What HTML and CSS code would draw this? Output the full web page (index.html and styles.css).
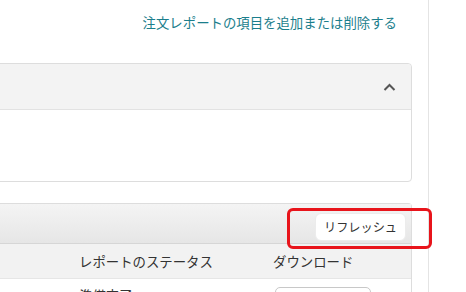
FILE: index.html
```html
<!DOCTYPE html>
<html lang="ja">
<head>
    <meta charset="UTF-8">
    <meta name="viewport" content="width=device-width, initial-scale=1.0">
    <title>注文レポート</title>
    <link rel="stylesheet" href="styles.css">
</head>
<body>
    <div class="page">
        <div class="main">
            <div class="toolbar">
                <a class="link" href="#">注文レポートの項目を追加または削除する</a>
            </div>

            <!-- request panel (collapsed content) -->
            <div class="panel panel-request">
                <div class="panel-head">
                    <svg class="chevron" width="13" height="8" viewBox="0 0 13 8">
                        <polyline points="1.5,7 6.5,2 11.5,7" fill="none" stroke="#555" stroke-width="2"/>
                    </svg>
                </div>
                <div class="panel-body"></div>
            </div>

            <!-- report list -->
            <div class="panel panel-list">
                <div class="list-head">
                    <button class="btn-refresh" type="button">リフレッシュ</button>
                    <div class="highlight"></div>
                </div>
                <div class="table-row table-head">
                    <div class="cell"></div>
                    <div class="cell">レポートのステータス</div>
                    <div class="cell">ダウンロード</div>
                </div>
                <div class="table-row">
                    <div class="cell"><span class="cut">JST</span></div>
                    <div class="cell">準備完了</div>
                    <div class="cell"><button class="btn-download" type="button" aria-label="ダウンロード"></button></div>
                </div>
            </div>
        </div>
        <div class="side"></div>
    </div>
</body>
</html>
```

FILE: styles.css
```css
body {
    margin: 0;
    overflow: hidden;
    background-color: #fff;
    font-family: "Noto Sans CJK JP", "Liberation Sans", sans-serif;
    color: #333;
}

.page {
    display: flex;
    height: 292px;
}

.main {
    width: 428px;
    flex: none;
    padding-right: 16px;
    box-sizing: border-box;
}

.side {
    flex: 1;
    border-left: 1px solid #e4e4e4;
}

.toolbar {
    display: flex;
    justify-content: flex-end;
    padding: 12px 15px 0 0;
}

.link {
    color: #1b7e8c;
    font-size: 13.4px;
    line-height: 20px;
    text-decoration: none;
}

/* shared panel box */
.panel {
    margin-left: -6px;
    border: 1px solid #dddddd;
    border-radius: 4px;
    background-color: #fff;
}

.panel-request {
    margin-top: 31px;
}

.panel-head {
    height: 45px;
    display: flex;
    justify-content: flex-end;
    align-items: center;
    padding-right: 15px;
    background-color: #f3f3f3;
    border-bottom: 1px solid #e2e2e2;
    border-radius: 4px 4px 0 0;
}

.panel-body {
    height: 71px;
}

.panel-list {
    margin-top: 21px;
    border-bottom: none;
    border-radius: 4px 4px 0 0;
}

.list-head {
    position: relative;
    height: 40px;
    box-sizing: border-box;
    display: flex;
    justify-content: flex-end;
    align-items: flex-start;
    padding: 9px 5px 0 0;
    background: linear-gradient(#f4f4f4, #e6e6e6);
    border-bottom: 1px solid #d6d6d6;
}

.btn-refresh {
    width: 91px;
    height: 28px;
    padding: 0;
    border: 1px solid #ececec;
    border-radius: 6px;
    background-color: #fff;
    font-family: inherit;
    font-size: 12.2px;
    color: #333;
}

/* red annotation around the refresh button */
.highlight {
    position: absolute;
    top: 4px;
    right: -21px;
    width: 145px;
    height: 41px;
    box-sizing: border-box;
    border: 3px solid #e8141b;
    border-radius: 6px;
    pointer-events: none;
}

.table-row {
    display: grid;
    grid-template-columns: 84px 194px 1fr;
    font-size: 13.4px;
}

.table-head {
    height: 34px;
    align-items: center;
    background-color: #f2f2f2;
    border-bottom: 1px solid #e6e6e6;
}

.table-row .cell {
    line-height: 16px;
    white-space: nowrap;
}

.table-row:not(.table-head) {
    padding-top: 8px;
}

.cut {
    margin-left: -11px;
    font-family: "Liberation Sans", sans-serif;
}

.btn-download {
    margin-left: 2px;
    width: 96px;
    height: 28px;
    border: 1px solid #c8c8c8;
    border-radius: 5px;
    background-color: #fff;
}
```
